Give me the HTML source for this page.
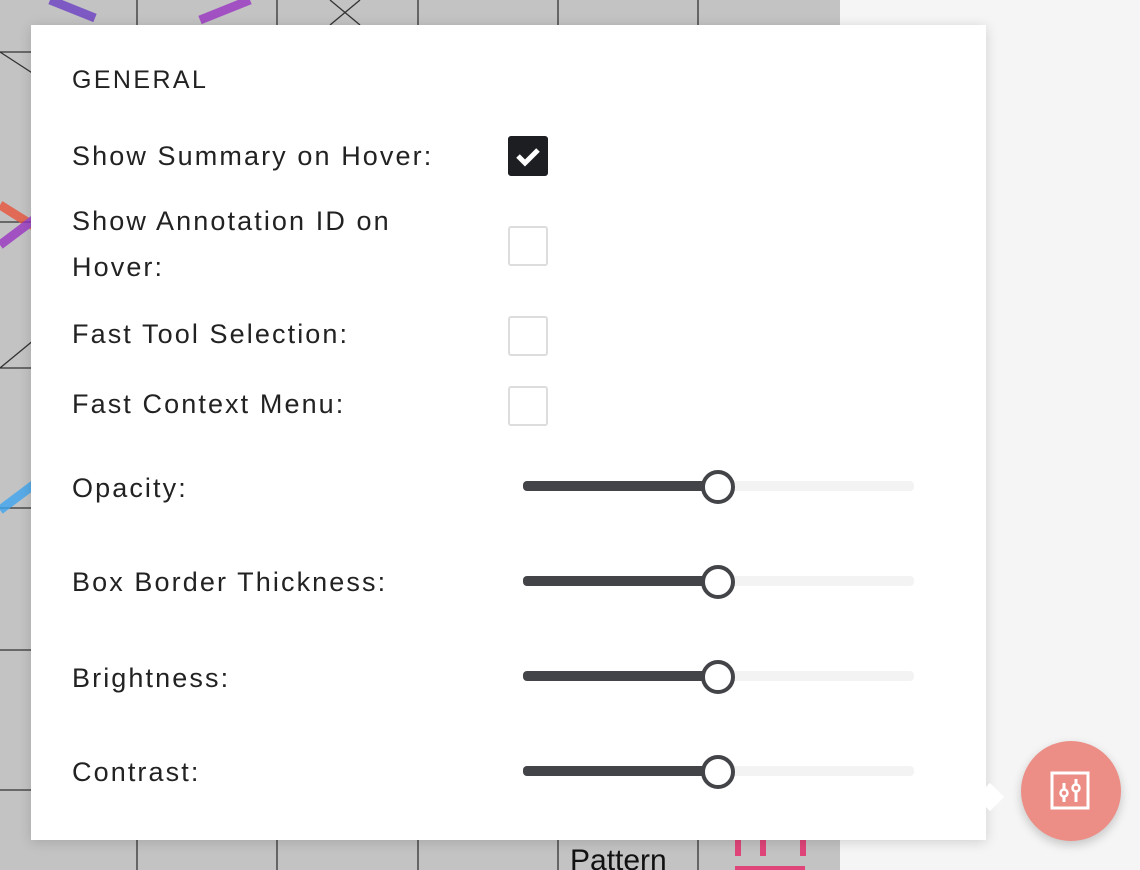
<!DOCTYPE html>
<html><head><style>
*{margin:0;padding:0;box-sizing:border-box}
body{width:1140px;height:870px;overflow:hidden;background:#f5f5f5;font-family:"Liberation Sans",sans-serif;position:relative}
.bg{position:absolute;left:0;top:0;width:840px;height:870px;background:#c3c3c3;overflow:hidden}
.panel{position:absolute;left:31px;top:25px;width:955px;height:815px;background:#fff;box-shadow:0 2px 12px rgba(0,0,0,.15)}
.t{position:absolute;left:72px;font-size:27px;color:#222;letter-spacing:2.1px;line-height:46px;white-space:nowrap}
.cb{position:absolute;left:508px;width:40px;height:40px;border:2px solid #ddd;border-radius:3px;background:#fff}
.track{position:absolute;left:523px;width:391px;height:10px;background:#f3f3f3;border-radius:4px}
.fill{position:absolute;left:523px;width:195px;height:10px;background:#434448;border-radius:4px 0 0 4px}
.thumb{position:absolute;left:701px;width:34px;height:34px;border:4px solid #434448;border-radius:50%;background:#fff}
.btn{position:absolute;left:1021px;top:741px;width:100px;height:100px;border-radius:50%;background:#ec8e86;box-shadow:0 4px 10px rgba(0,0,0,.2)}
.arrow{position:absolute;left:980px;top:787px;width:20px;height:20px;background:#fff;transform:rotate(45deg)}
</style></head><body>
<div class="bg">
<svg width="840" height="870" style="position:absolute;left:0;top:0">
<g stroke="#333" stroke-width="1.3" fill="none">
<line x1="137" y1="0" x2="137" y2="870"/><line x1="277" y1="0" x2="277" y2="870"/><line x1="418" y1="0" x2="418" y2="870"/><line x1="558" y1="0" x2="558" y2="870"/><line x1="698" y1="0" x2="698" y2="870"/>
<line x1="0" y1="52" x2="840" y2="52"/><line x1="0" y1="222" x2="840" y2="222"/><line x1="0" y1="368" x2="840" y2="368"/><line x1="0" y1="508" x2="840" y2="508"/><line x1="0" y1="650" x2="840" y2="650"/><line x1="0" y1="790" x2="840" y2="790"/>
<line x1="0" y1="52" x2="40" y2="78"/><line x1="0" y1="368" x2="40" y2="335"/><line x1="330" y1="0" x2="360" y2="25"/><line x1="360" y1="0" x2="330" y2="25"/>
</g>
<g stroke-width="9" stroke-linecap="butt" opacity=".8">
<line x1="50" y1="0" x2="95" y2="18" stroke="#6c3fc4"/><line x1="200" y1="20" x2="250" y2="0" stroke="#9b35c4"/>
<line x1="0" y1="205" x2="40" y2="230" stroke="#e8553c"/><line x1="0" y1="245" x2="40" y2="215" stroke="#9b35c4"/>
<line x1="0" y1="510" x2="40" y2="480" stroke="#3ea6f0"/>
</g>
<text x="570" y="870" font-family="Liberation Sans" font-size="30" fill="#111">Pattern</text>
<g fill="#e0457a"><rect x="735" y="836" width="6" height="20"/><rect x="760" y="836" width="6" height="20"/><rect x="800" y="836" width="6" height="20"/><rect x="735" y="866" width="70" height="6"/></g>
</svg>
</div>
<div class="panel"></div>
<div class="arrow"></div>
<div class="t" style="top:57px;font-size:25px;letter-spacing:2.4px">GENERAL</div>
<div class="t" style="top:133px">Show Summary on Hover:</div>
<div class="t" style="top:198px">Show Annotation ID on<br>Hover:</div>
<div class="t" style="top:311px">Fast Tool Selection:</div>
<div class="t" style="top:381px">Fast Context Menu:</div>
<div class="t" style="top:465px">Opacity:</div>
<div class="t" style="top:559px">Box Border Thickness:</div>
<div class="t" style="top:655px">Brightness:</div>
<div class="t" style="top:749px">Contrast:</div>
<div class="cb" style="top:136px;background:#1d1e22;border-color:#1d1e22">
<svg width="36" height="36" style="position:absolute;left:0;top:0"><path d="M8 18 L15 25 L28 12" stroke="#fff" stroke-width="5" fill="none"/></svg></div>
<div class="cb" style="top:226px"></div>
<div class="cb" style="top:316px"></div>
<div class="cb" style="top:386px"></div>
<div class="track" style="top:481px"></div><div class="fill" style="top:481px"></div><div class="thumb" style="top:470px"></div>
<div class="track" style="top:576px"></div><div class="fill" style="top:576px"></div><div class="thumb" style="top:565px"></div>
<div class="track" style="top:671px"></div><div class="fill" style="top:671px"></div><div class="thumb" style="top:660px"></div>
<div class="track" style="top:766px"></div><div class="fill" style="top:766px"></div><div class="thumb" style="top:755px"></div>
<div class="btn">
<svg width="100" height="100" style="position:absolute;left:0;top:0">
<rect x="31" y="32" width="36" height="35" stroke="#fff" stroke-width="3" fill="none"/>
<line x1="43" y1="42" x2="43" y2="61" stroke="#fff" stroke-width="3"/>
<line x1="55" y1="38" x2="55" y2="61" stroke="#fff" stroke-width="3"/>
<circle cx="43" cy="52" r="3.5" fill="#ec8e86" stroke="#fff" stroke-width="2.5"/>
<circle cx="55" cy="47" r="3.5" fill="#ec8e86" stroke="#fff" stroke-width="2.5"/>
</svg></div>
</body></html>
